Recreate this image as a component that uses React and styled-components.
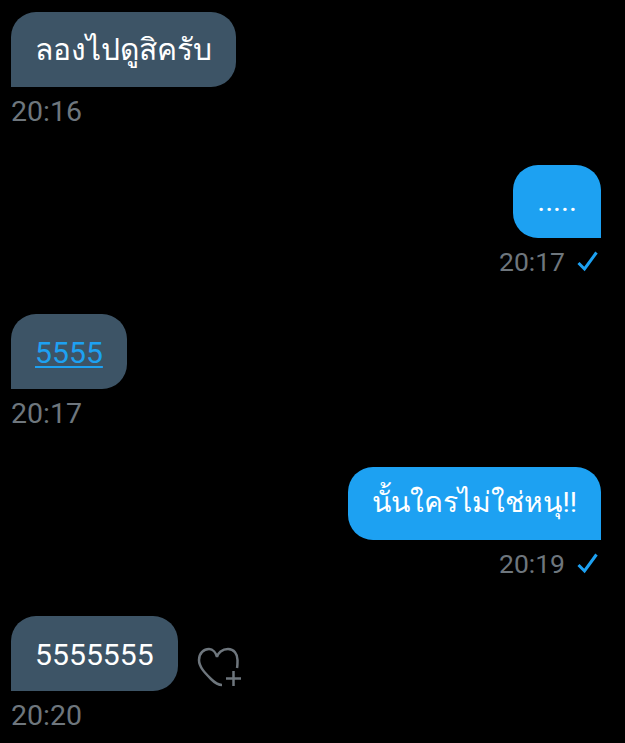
import { createGlobalStyle, styled } from 'styled-components';

const Global = createGlobalStyle`
    html, body { margin: 0; background: #000; }
    body { font-family: Roboto, "Noto Sans", "DejaVu Sans", sans-serif; }
`;
const Thread = styled.div`
    width: 625px;
    height: 743px;
    box-sizing: border-box;
    overflow: hidden;
    padding: 12px 24px 0 11px;
    display: flex;
    flex-direction: column;
    background: #000;
`;
const Message = styled.div`
    display: flex;
    flex-direction: column;
    align-items: ${(p) => (p.$mine ? 'flex-end' : 'flex-start')};
    height: ${(p) => p.$height}px;
`;
const BubbleRow = styled.div`
    display: flex;
    align-items: flex-start;
    gap: 19px;
`;
const Bubble = styled.div`
    height: ${(p) => (p.$mine ? 73 : 75)}px;
    box-sizing: border-box;
    padding: ${(p) => (p.$digits ? '3px 24px 0' : '0 24px')};
    display: flex;
    align-items: center;
    font-size: ${(p) => p.$size || 30.2}px;
    line-height: 1;
    white-space: nowrap;
    color: #fff;
    background: ${(p) => (p.$mine ? '#1da1f2' : '#3d5466')};
    border-radius: ${(p) => (p.$mine ? '25px 25px 0 25px' : '25px 25px 25px 0')};
`;
const LinkText = styled.span`
    color: #1da1f2;
    text-decoration: underline;
    text-decoration-thickness: 2px;
    text-underline-offset: 3px;
`;
const Meta = styled.div`
    display: flex;
    align-items: center;
    gap: 12px;
    height: ${(p) => (p.$mine ? 46 : 48)}px;
    font-size: ${(p) => (p.$mine ? 26.5 : 28.5)}px;
    color: #6e767d;
`;
const Check = styled.svg`
    width: 22px;
    height: 22px;
    margin-right: 2px;
    fill: none;
    stroke: #1da1f2;
    stroke-width: 3;
`;
const HeartAdd = styled.svg`
    width: 48px;
    height: 44px;
    margin-top: 30px;
    fill: none;
    stroke: #6e767d;
    stroke-width: 2.5;
`;

function Sent({ text, time, height, size }) {
    return (
        <Message $mine $height={height}>
            <Bubble $mine $size={size}>{text}</Bubble>
            <Meta $mine>
                {time}
                <Check viewBox="0 0 22 22">
                    <path d="M1.5 13 L7.5 19 L19.5 2.5" />
                </Check>
            </Meta>
        </Message>
    );
}

export default function App() {
    return (
        <Thread>
            <Global />
            <Message $height={153}>
                <Bubble $size={30}>ลองไปดูสิครับ</Bubble>
                <Meta>20:16</Meta>
            </Message>
            <Sent text="....." time="20:17" height={149} />
            <Message $height={153}>
                <Bubble $digits><LinkText>5555</LinkText></Bubble>
                <Meta>20:17</Meta>
            </Message>
            <Sent text="นั้นใครไม่ใช่หนุ!!" time="20:19" height={149} size={28.3} />
            <Message $height={127}>
                <BubbleRow>
                    <Bubble $digits>5555555</Bubble>
                    <HeartAdd viewBox="0 0 48 44">
                        <path d="M25 39 C21 39 17 36 14 33 C8 27 2 21 2 14 C2 7 7 3 12 3 C16 3 19 7 20 11 C21 7 25 3 31 3 C37 3 40.5 8 40.5 14 C40.5 17 40.5 20 40 22" />
                        <path d="M36.5 25 V40 M29 32.5 H44" />
                    </HeartAdd>
                </BubbleRow>
                <Meta>20:20</Meta>
            </Message>
        </Thread>
    );
}
